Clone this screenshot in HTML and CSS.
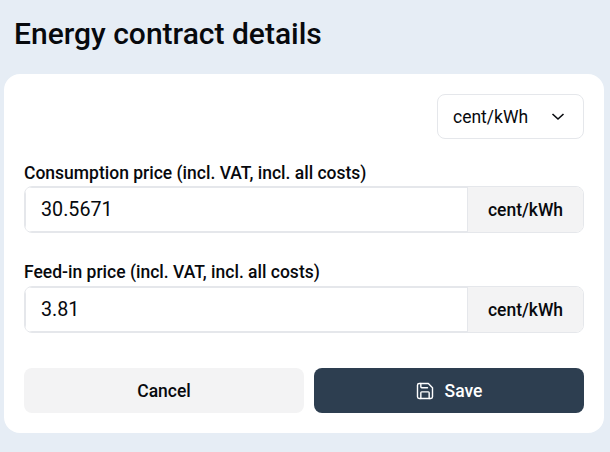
FILE: index.html
```html
<!DOCTYPE html>
<html lang="en">
<head>
  <meta charset="UTF-8">
  <title>Energy contract details</title>
  <link rel="stylesheet" href="styles.css">
</head>
<body>
  <h1 class="title">Energy contract details</h1>
  <div class="card">
    <div class="unit-row">
      <div class="unit-select">
        <span>cent/kWh</span>
        <svg width="16" height="16" viewBox="0 0 16 16">
          <polyline points="2.5 5 8 10 13.5 5"></polyline>
        </svg>
      </div>
    </div>

    <div class="field">
      <label class="field-label">Consumption price (incl. VAT, incl. all costs)</label>
      <div class="input-group">
        <input class="input" type="text" value="30.5671">
        <div class="addon">cent/kWh</div>
      </div>
    </div>

    <div class="field">
      <label class="field-label">Feed-in price (incl. VAT, incl. all costs)</label>
      <div class="input-group">
        <input class="input" type="text" value="3.81">
        <div class="addon">cent/kWh</div>
      </div>
    </div>

    <div class="actions">
      <button class="btn btn-cancel">Cancel</button>
      <button class="btn btn-save">
        <svg width="20" height="20" viewBox="0 0 24 24">
          <path d="M5 3h11l5 5v11a2 2 0 0 1-2 2H5a2 2 0 0 1-2-2V5a2 2 0 0 1 2-2z"></path>
          <path d="M7 3v4a1 1 0 0 0 1 1h7"></path>
          <path d="M7 21v-7a1 1 0 0 1 1-1h8a1 1 0 0 1 1 1v7"></path>
        </svg>
        <span>Save</span>
      </button>
    </div>
  </div>
</body>
</html>
```

FILE: styles.css
```css
* {
  box-sizing: border-box;
}

body {
  margin: 0;
  height: 452px;
  overflow: hidden;
  padding: 0 6px 0 4px;
  background: #e6edf5;
  font-family: Roboto, "Liberation Sans", sans-serif;
  color: #07090d;
}

.title {
  margin: 0;
  padding: 17px 10px 0;
  height: 74px;
  font-size: 30px;
  line-height: 34px;
  font-weight: 500;
}

.card {
  height: 359px;
  padding: 20px;
  background: #fff;
  border-radius: 16px;
}

.unit-row {
  display: flex;
  justify-content: flex-end;
  height: 45px;
}

.unit-select {
  width: 147px;
  padding: 0 15px;
  display: flex;
  align-items: center;
  justify-content: space-between;
  border: 1px solid #e5e7eb;
  border-radius: 8px;
  font-size: 17.5px;
}

.unit-select svg {
  fill: none;
  stroke: #07090d;
  stroke-width: 1.6;
  margin-right: 2px;
}

.field {
  height: 100px;
  padding-top: 24px;
}

.field-label {
  display: block;
  height: 23px;
  font-size: 17.5px;
  line-height: 20px;
  font-weight: 500;
}

.field + .field .field-label {
  height: 24px;
  margin-top: -1px;
}

.input-group {
  display: flex;
  height: 47px;
  border: 1px solid #e5e7eb;
  border-radius: 8px;
  overflow: hidden;
}

.input {
  flex: 1;
  min-width: 0;
  padding: 0 15px;
  border: none;
  border-top: 1px solid #e5e7eb;
  border-left: 1px solid #e5e7eb;
  border-bottom: 1px solid #e5e7eb;
  outline: none;
  font-family: inherit;
  font-size: 19.7px;
  color: #07090d;
}

.addon {
  width: 116px;
  display: flex;
  align-items: center;
  justify-content: center;
  background: #f3f3f4;
  border-left: 1px solid #e5e7eb;
  font-size: 17.5px;
  font-weight: 500;
}

.actions {
  display: flex;
  gap: 10px;
  margin-top: 29px;
}

.btn {
  height: 45px;
  display: flex;
  align-items: center;
  justify-content: center;
  border: none;
  border-radius: 8px;
  font-family: inherit;
  font-size: 17.5px;
  font-weight: 500;
}

.btn-cancel {
  width: 280px;
  background: #f3f3f4;
  color: #07090d;
}

.btn-save {
  flex: 1;
  gap: 10px;
  background: #2d3e50;
  color: #fff;
}

.btn-save svg {
  fill: none;
  stroke: #fff;
  stroke-width: 1.7;
  stroke-linecap: round;
  stroke-linejoin: round;
  margin-left: -1px;
}
```
